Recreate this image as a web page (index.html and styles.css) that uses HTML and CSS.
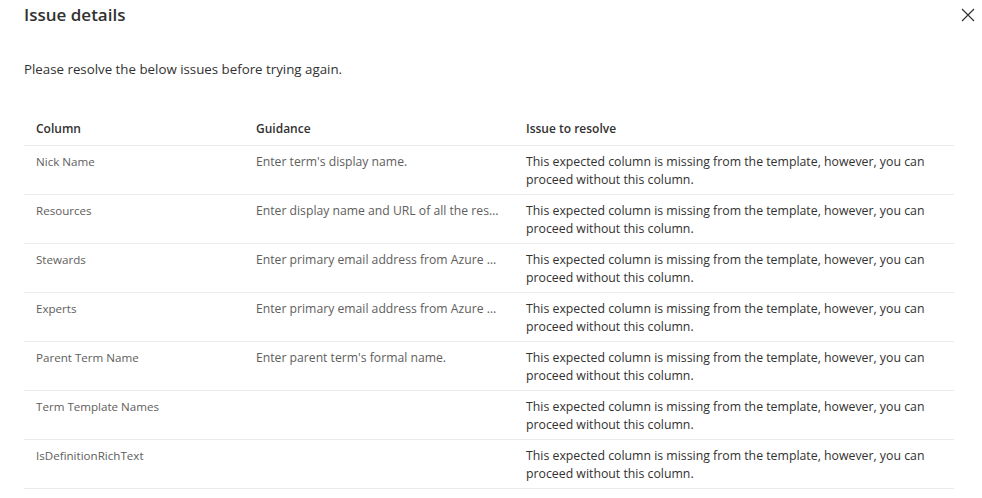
FILE: index.html
```html
<!DOCTYPE html>
<html lang="en">
<head>
    <meta charset="UTF-8">
    <meta name="viewport" content="width=device-width, initial-scale=1.0">
    <title>Issue details</title>
    <link rel="stylesheet" href="styles.css">
</head>
<body>
    <div class="panel">
        <div class="title-bar">
            <h1>Issue details</h1>
            <button class="close-btn" aria-label="Close">
                <svg width="14" height="14" viewBox="0 0 14 14">
                    <path d="M1 1 L13 13 M13 1 L1 13" stroke="#323130" stroke-width="1.2" fill="none"/>
                </svg>
            </button>
        </div>
        <p class="intro">Please resolve the below issues before trying again.</p>

        <table class="issues">
            <colgroup>
                <col class="col-name">
                <col class="col-guide">
                <col class="col-issue">
            </colgroup>
            <thead>
                <tr>
                    <th>Column</th>
                    <th>Guidance</th>
                    <th>Issue to resolve</th>
                </tr>
            </thead>
            <tbody>
                <tr>
                    <td>Nick Name</td>
                    <td class="guide">Enter term's display name.</td>
                    <td class="issue">This expected column is missing from the template, however, you can proceed without this column.</td>
                </tr>
                <tr>
                    <td>Resources</td>
                    <td class="guide">Enter display name and URL of all the resources related to this term.</td>
                    <td class="issue">This expected column is missing from the template, however, you can proceed without this column.</td>
                </tr>
                <tr>
                    <td>Stewards</td>
                    <td class="guide">Enter primary email address from Azure active directory for stewards.</td>
                    <td class="issue">This expected column is missing from the template, however, you can proceed without this column.</td>
                </tr>
                <tr>
                    <td>Experts</td>
                    <td class="guide">Enter primary email address from Azure active directory for experts.</td>
                    <td class="issue">This expected column is missing from the template, however, you can proceed without this column.</td>
                </tr>
                <tr>
                    <td>Parent Term Name</td>
                    <td class="guide">Enter parent term's formal name.</td>
                    <td class="issue">This expected column is missing from the template, however, you can proceed without this column.</td>
                </tr>
                <tr>
                    <td>Term Template Names</td>
                    <td class="guide"></td>
                    <td class="issue">This expected column is missing from the template, however, you can proceed without this column.</td>
                </tr>
                <tr>
                    <td>IsDefinitionRichText</td>
                    <td class="guide"></td>
                    <td class="issue">This expected column is missing from the template, however, you can proceed without this column.</td>
                </tr>
            </tbody>
        </table>
    </div>
</body>
</html>
```

FILE: styles.css
```css
* {
    margin: 0;
    padding: 0;
    box-sizing: border-box;
}

body {
    background-color: #ffffff;
    color: #323130;
    font-family: 'Segoe UI', 'Open Sans', 'Liberation Sans', sans-serif;
}

.panel {
    padding: 0 28px 0 24px;
}

.title-bar {
    display: flex;
    justify-content: space-between;
    align-items: center;
    height: 29px;
}

h1 {
    font-size: 17px;
    font-weight: 600;
    line-height: 28px;
    color: #323130;
}

.close-btn {
    background: none;
    border: none;
    width: 14px;
    height: 14px;
    margin-right: -21px;
    cursor: pointer;
    display: flex;
}

.intro {
    margin-top: 30px;
    font-size: 13.3px;
    line-height: 20px;
}

.issues {
    margin-top: 33px;
    width: 930px;
    border-collapse: collapse;
    table-layout: fixed;
}

.col-name {
    width: 220px;
}

.col-guide {
    width: 270px;
}

.col-issue {
    width: 440px;
}

th {
    text-align: left;
    font-size: 12px;
    font-weight: 600;
    height: 33px;
    padding: 0 12px;
    border-bottom: 1px solid #edebe9;
    vertical-align: middle;
}

td {
    font-size: 11.6px;
    line-height: 18px;
    color: #605e5c;
    padding: 7px 12px 5px;
    height: 49px;
    vertical-align: top;
    border-bottom: 1px solid #edebe9;
}

td.guide {
    font-size: 12.2px;
    white-space: nowrap;
    overflow: hidden;
    text-overflow: ellipsis;
}

td.issue {
    font-size: 12.3px;
    color: #323130;
}
```
